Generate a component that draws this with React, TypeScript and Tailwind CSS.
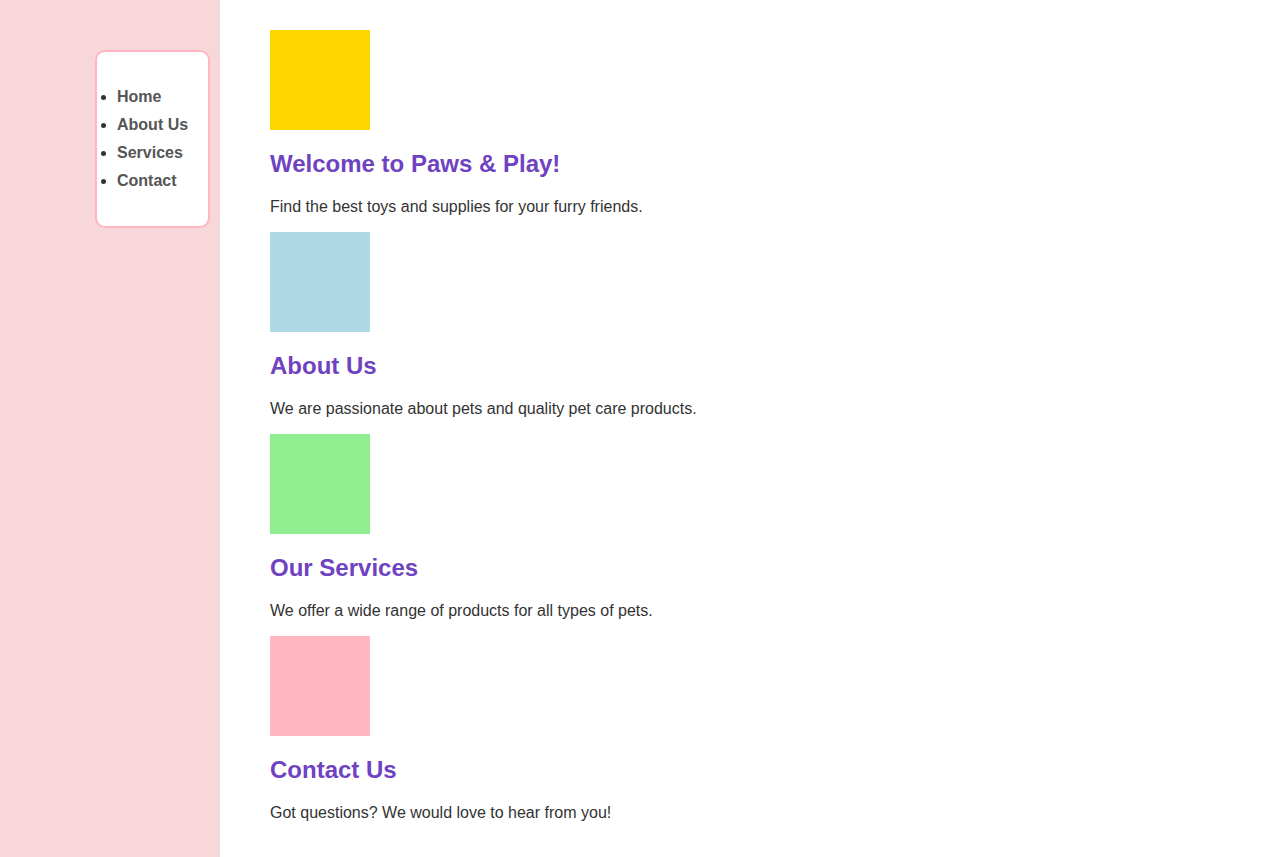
export default function App() {
  const sections = [
    { color: "bg-[#ffd700]", title: "Welcome to Paws & Play!", text: "Find the best toys and supplies for your furry friends." },
    { color: "bg-[#add8e6]", title: "About Us", text: "We are passionate about pets and quality pet care products." },
    { color: "bg-[#90ee90]", title: "Our Services", text: "We offer a wide range of products for all types of pets." },
    { color: "bg-[#ffb6c1]", title: "Contact Us", text: "Got questions? We would love to hear from you!" },
  ];
  const links = ["Home", "About Us", "Services", "Contact"];

  return (
    <div className="flex min-h-[857px] font-['Liberation_Sans',Arial,sans-serif] text-[#333]">
      {/* Sidebar */}
      <aside className="w-[220px] shrink-0 bg-[#f8d7da] flex justify-end items-start pt-[50px] pr-[10px]">
        <nav className="w-[115px] bg-white border-2 border-[#ffb6c1] rounded-[10px] py-[31px]">
          <ul className="list-disc pl-[20px] marker:text-[#333]">
            {links.map((l) => (
              <li key={l} className="text-[16px] leading-[28px] font-bold text-[#555]">
                {l}
              </li>
            ))}
          </ul>
        </nav>
      </aside>

      {/* Main */}
      <main className="flex-1 pt-[30px] pl-[50px]">
        {sections.map((s, i) => (
          <section key={i}>
            <div className={`w-[100px] h-[100px] ${s.color} ${i > 0 ? "mt-[16px]" : ""}`} />
            <h2 className="mt-[20px] mb-[20px] text-[24px] leading-[27.6px] font-bold text-[#6f42c1]">{s.title}</h2>
            <p className="text-[16px] leading-[18.4px]">{s.text}</p>
          </section>
        ))}
      </main>
    </div>
  );
}
